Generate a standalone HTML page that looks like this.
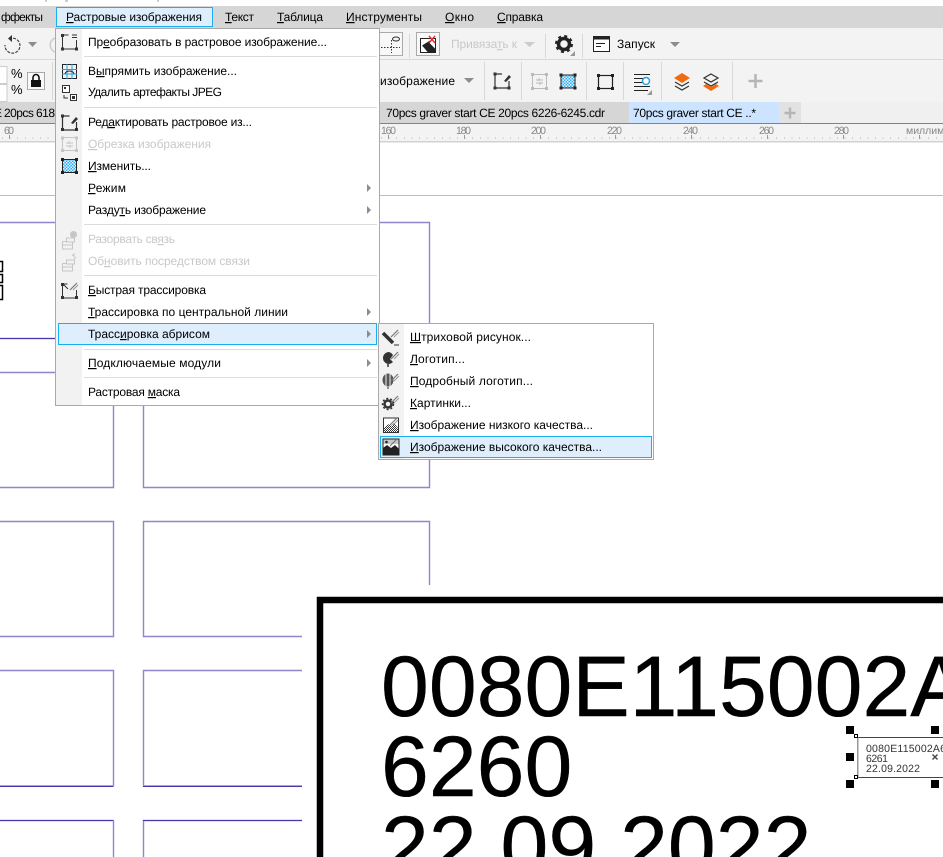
<!DOCTYPE html>
<html><head><meta charset="utf-8"><style>
html,body{margin:0;padding:0;background:#fff;overflow:hidden}
svg{display:block;font-family:"Liberation Sans","Noto Sans CJK SC",sans-serif;font-size:12px}
.u{text-decoration:underline}
.d{fill:#c9c9c9}
.g{fill:#868686;font-size:10.5px}
</style></head><body>
<svg width="943" height="857" viewBox="0 0 943 857" xmlns="http://www.w3.org/2000/svg" text-rendering="geometricPrecision">
<defs>
<pattern id="ch" width="3" height="3" patternUnits="userSpaceOnUse"><rect width="3" height="3" fill="#35aef0"/><rect width="1.5" height="1.5" fill="#dff2ff"/><rect x="1.5" y="1.5" width="1.5" height="1.5" fill="#dff2ff"/></pattern>
<pattern id="ch2" width="2" height="2" patternUnits="userSpaceOnUse"><rect width="2" height="2" fill="#fff"/><rect width="1" height="1" fill="#333"/><rect x="1" y="1" width="1" height="1" fill="#333"/></pattern>
<g id="hd"><rect x="-1.500" y="-1.500" width="3" height="3" fill="currentColor"/></g>
<g id="pen"><path d="M0 8 L7 1" stroke="#777" stroke-width="1.200" fill="none"/><path d="M3 8 L8 3" stroke="#999" stroke-width="1" fill="none"/></g>
</defs>

<!-- canvas -->
<rect width="943" height="857" fill="#fff"/>
<rect x="45" y="0" width="2" height="2" fill="#e0c4cc"/><rect x="65" y="0" width="3" height="2" fill="#ccc"/><rect x="157" y="0" width="2" height="2" fill="#e0c4cc"/>
<rect x="0" y="195" width="943" height="1" fill="#bdbdbd"/>
<g fill="none" stroke="#8f86cc" stroke-width="1.400">
<path d="M0 222.500H113.500V338.500H0"/><path d="M143.500 222.500H429.500V338.500H143.500Z"/>
<path d="M0 372.500H113.500V487.500H0"/><path d="M143.500 372.500H429.500V487.500H143.500Z"/>
<path d="M0 521.500H113.500V636.500H0"/><path d="M429.500 585V521.500H143.500V636.500H302"/>
<path d="M0 670.500H113.500V786H0"/><path d="M302 670.500H143.500V786H302"/>
<path d="M0 820.500H113.500V857"/><path d="M302 820.500H143.500V857"/>
</g>
<g fill="none" stroke="#4a38a8" shape-rendering="crispEdges"><path d="M0 786.500H113M143 786.500H302M0 820.500H113M143 820.500H302M0 338.500H55"/></g>
<g fill="none" stroke="#000" stroke-width="1.500"><rect x="-3" y="261.500" width="5.500" height="10"/><rect x="-3" y="274.500" width="5.500" height="8"/><rect x="-3" y="285.500" width="5.500" height="14"/></g>

<!-- big label -->
<rect x="303" y="590" width="640" height="267" fill="#fff"/>
<path d="M320 857V600H943" fill="none" stroke="#000" stroke-width="6.500"/>
<g fill="#000" stroke="#000" stroke-width=".4" style="font-size:86px">
<text x="381" y="716">0080E115002A6</text>
<text x="381" y="796">6260</text>
<text x="381" y="876">22.09.2022</text>
</g>
<rect x="857" y="737" width="86" height="41" fill="#fff"/>
<path d="M857 737.500H943M857 777.500H943" stroke="#444" stroke-width="1"/>
<rect x="857" y="737" width="1.500" height="41" fill="#999"/>
<g fill="#333" style="font-size:10.500px">
<text x="866" y="752" textLength="80">0080E115002A6</text>
<text x="866" y="762" textLength="22">6261</text>
<text x="866" y="772" textLength="54">22.09.2022</text>
</g>
<path d="M932.500 754.500l5 5m0-5l-5 5" stroke="#444" stroke-width="1.400"/>
<g fill="#000"><rect x="846" y="726" width="8" height="8"/><rect x="931" y="726" width="8" height="8"/><rect x="846" y="753" width="8" height="8"/><rect x="846" y="780" width="8" height="8"/><rect x="931" y="780" width="8" height="8"/></g>
<g fill="#fff" stroke="#000"><rect x="854.500" y="734.500" width="3" height="3"/><rect x="854.500" y="775.500" width="3" height="3"/></g>

<!-- chrome -->
<rect y="6" width="943" height="22" fill="#d6d6d6"/>
<rect y="28" width="943" height="74" fill="#f3f3f3"/>
<rect y="59" width="943" height="1" fill="#d8d8d8"/>
<rect y="102" width="943" height="21" fill="#f0f0f0"/>
<rect y="102" width="629" height="21" fill="#d6d6d6"/>
<rect x="629" y="102" width="150" height="21" fill="#cce4ff"/>
<rect x="779" y="102" width="22" height="21" fill="#e2e2e2"/>
<path d="M790 107.500v11M784.500 113h11" stroke="#b5b5b5" stroke-width="2.400"/>
<rect y="123" width="943" height="1" fill="#2a9fe0"/>
<rect y="124" width="943" height="17" fill="#f3f3f3"/>
<rect y="141" width="943" height="1.500" fill="#d2d2d2"/>

<!-- menu bar -->
<text x="1" y="21" textLength="42">ффекты</text>
<rect x="56.500" y="7.500" width="156" height="19" fill="#dfeefd" stroke="#18aef0"/>
<text x="66" y="21" textLength="136"><tspan class="u">Р</tspan>астровые изображения</text>
<text x="225" y="21" textLength="29"><tspan class="u">Т</tspan>екст</text>
<text x="277" y="21" textLength="46"><tspan class="u">Т</tspan>аблица</text>
<text x="346" y="21" textLength="76"><tspan class="u">И</tspan>нструменты</text>
<text x="445" y="21" textLength="29"><tspan class="u">О</tspan>кно</text>
<text x="497" y="21" textLength="46"><tspan class="u">С</tspan>правка</text>

<!-- toolbar 1 -->
<path d="M9 39a7.500 7.500 0 1 1-4 6" fill="none" stroke="#444" stroke-width="1.200" stroke-dasharray="3 1.200"/>
<path d="M12 35v7l-4-3.500z" fill="#333"/>
<path d="M28 42h9l-4.500 5z" fill="#8c8c8c"/>
<path d="M55 38a7.500 7.500 0 0 0 0 14" fill="none" stroke="#ccc" stroke-width="1.500"/>
<rect x="370.500" y="32.500" width="32" height="23" fill="#f8f8f8" stroke="#aaa"/>
<path d="M381 47.500h19M391.500 40v13" stroke="#333" stroke-dasharray="1.500 1.500"/><ellipse cx="396" cy="39" rx="3.500" ry="2" fill="none" stroke="#333"/>
<rect x="409" y="34" width="1" height="24" fill="#d8d8d8"/>
<rect x="416.500" y="32.500" width="23" height="23" fill="#f8f8f8" stroke="#aaa"/>
<rect x="420.500" y="38.500" width="15" height="14" fill="#fff" stroke="#222"/>
<path d="M422 45.500l8-5v3l5 5v4h-7z" fill="#222"/><path d="M429 36l6 7m0-7l-6 7" stroke="#e03030" stroke-width="1.400"/>
<text x="451" y="48" class="d" textLength="66">Привяза<tspan class="u">т</tspan>ь к</text>
<path d="M524 42h11l-5.500 5z" fill="#ccc"/>
<rect x="545" y="34" width="1" height="24" fill="#d8d8d8"/>
<circle cx="564" cy="44" r="5.500" fill="none" stroke="#222" stroke-width="3.500"/><circle cx="564" cy="44" r="8" fill="none" stroke="#222" stroke-width="2" stroke-dasharray="3 3.280"/>
<path d="M575 51v5h-5z" fill="#999"/>
<rect x="582" y="34" width="1" height="24" fill="#d8d8d8"/>
<rect x="593.500" y="36.500" width="16" height="15" fill="#fff" stroke="#222"/><rect x="593" y="36" width="17" height="3.500" fill="#222"/><path d="M596 43.500h9M596 46.500h5" stroke="#222"/>
<text x="617" y="48" textLength="38">Запуск</text>
<path d="M670 42h10l-5 5z" fill="#8c8c8c"/>

<!-- toolbar 2 -->
<rect x="-1" y="66.500" width="8" height="17" fill="#fff" stroke="#ccc"/><rect x="-1" y="84.500" width="8" height="17" fill="#fff" stroke="#ccc"/>
<text x="11" y="78" style="font-size:13px" textLength="10">%</text><text x="11" y="94" style="font-size:13px" textLength="10">%</text>
<rect x="27.500" y="72.500" width="17" height="17" fill="#f8f8f8" stroke="#aaa"/>
<rect x="31" y="80" width="10" height="7" fill="#111"/><path d="M33 80v-2.500a3 3 0 0 1 6 0V80" fill="none" stroke="#111" stroke-width="1.600"/>
<rect x="52" y="62" width="1" height="38" fill="#d8d8d8"/>
<text x="380" y="85" textLength="75">изображение</text>
<path d="M464 78h10l-5 5z" fill="#8c8c8c"/>
<rect x="484" y="62" width="1" height="38" fill="#d8d8d8"/>
<g color="#333"><path d="M495 74v14h14v-7M495 74h7" fill="none" stroke="#333" stroke-width="1.200"/><use href="#hd" x="495" y="74"/><use href="#hd" x="495" y="88"/><use href="#hd" x="509" y="88"/><path d="M504 81l5-6 2 2-5 5z" fill="#333"/></g>
<rect x="521" y="62" width="1" height="38" fill="#d8d8d8"/>
<g color="#bbb"><rect x="532.500" y="74.500" width="14" height="14" fill="none" stroke="#bbb"/><use href="#hd" x="532.500" y="74.500"/><use href="#hd" x="546.500" y="74.500"/><use href="#hd" x="532.500" y="88.500"/><use href="#hd" x="546.500" y="88.500"/><path d="M536 80h7M543 83h-7M539 78v3M540 82v3" stroke="#bbb"/></g>
<g color="#222"><rect x="561" y="75" width="14" height="13" fill="url(#ch)" stroke="#222"/><use href="#hd" x="561" y="75"/><use href="#hd" x="575" y="75"/><use href="#hd" x="561" y="88"/><use href="#hd" x="575" y="88"/></g>
<rect x="586" y="62" width="1" height="38" fill="#d8d8d8"/>
<g color="#222"><rect x="598.500" y="75.500" width="14" height="13" fill="none" stroke="#222" stroke-width="1.200"/><use href="#hd" x="598.500" y="75.500"/><use href="#hd" x="612.500" y="75.500"/><use href="#hd" x="598.500" y="88.500"/><use href="#hd" x="612.500" y="88.500"/></g>
<rect x="623" y="62" width="1" height="38" fill="#d8d8d8"/>
<path d="M634 74.500h16M634 78.500h9M634 82.500h9M634 86.500h16M634 90.500h14" stroke="#222"/><circle cx="646" cy="81" r="3.500" fill="#fff" stroke="#2a9fe0" stroke-width="1.500"/><path d="M652 90v5h-5z" fill="#999"/>
<rect x="661" y="62" width="1" height="38" fill="#d8d8d8"/>
<path d="M682 73l8 5-8 5-8-5z" fill="#f26a10"/><path d="M675 82l7 4 7-4M675 86l7 4 7-4" fill="none" stroke="#333" stroke-width="1.200"/>
<path d="M711 74l7 4-7 4-7-4zM704 82l7 4 7-4" fill="none" stroke="#333" stroke-width="1.200"/><path d="M711 91l8-5-3-2-5 3-5-3-3 2z" fill="#f26a10"/>
<rect x="732" y="62" width="1" height="38" fill="#d8d8d8"/>
<path d="M755.500 74v14M748.500 81h14" stroke="#b5b5b5" stroke-width="2.500"/>

<!-- tabs -->
<text x="-6" y="117">E</text>
<text x="4" y="117" textLength="51">20pcs 618</text>
<text x="386" y="117" textLength="219">70pcs graver start CE 20pcs 6226-6245.cdr</text>
<text x="633" y="117" textLength="123">70pcs graver start CE ..*</text>

<!-- ruler -->
<text x="4" y="134" class="g" textLength="10">60</text>
<text x="381" y="134" class="g" textLength="15">160</text>
<text x="456" y="134" class="g" textLength="15">180</text>
<text x="531" y="134" class="g" textLength="15">200</text>
<text x="607" y="134" class="g" textLength="15">220</text>
<text x="683" y="134" class="g" textLength="15">240</text>
<text x="759" y="134" class="g" textLength="15">260</text>
<text x="834" y="134" class="g" textLength="15">280</text>
<text x="906" y="134" class="g" textLength="62">миллиметры</text>
<g stroke="#999" shape-rendering="crispEdges">
<path d="M9.500 135v4M388.500 135v4M464.500 135v4M540.500 135v4M615.500 135v4M691.500 135v4M767.500 135v4M843.500 135v4M919.500 135v4"/>
<path stroke="#aaa" stroke-dasharray="1 6.600" d="M2 138H55M381 138H943"/>
</g>

<!-- main menu -->
<rect x="55.500" y="28.500" width="324" height="377" fill="#fff" stroke="#aaa"/>
<rect x="56" y="29" width="26" height="376" fill="#f2f2f2"/>
<g fill="#dcdcdc"><rect x="84" y="56" width="293" height="1"/><rect x="84" y="107" width="293" height="1"/><rect x="84" y="224" width="293" height="1"/><rect x="84" y="275" width="293" height="1"/><rect x="84" y="349" width="293" height="1"/><rect x="84" y="377" width="293" height="1"/></g>
<rect x="58.500" y="323.500" width="318" height="21" fill="#dfeefd" stroke="#18aef0"/>

<text x="88" y="46" textLength="239">Пр<tspan class="u">е</tspan>образовать в растровое изображение...</text>
<text x="88" y="75" textLength="149">В<tspan class="u">ы</tspan>прямить изображение...</text>
<text x="88" y="96" textLength="134">Удалить артефакты JPEG</text>
<text x="88" y="126" textLength="164">Ред<tspan class="u">а</tspan>ктировать растровое из...</text>
<text x="88" y="148" class="d" textLength="123"><tspan class="u">О</tspan>брезка изображения</text>
<text x="88" y="170" textLength="63"><tspan class="u">И</tspan>зменить...</text>
<text x="88" y="192" textLength="38"><tspan class="u">Р</tspan>ежим</text>
<text x="88" y="214" textLength="118">Разду<tspan class="u">т</tspan>ь изображение</text>
<text x="88" y="243" class="d" textLength="87">Разорвать св<tspan class="u">я</tspan>зь</text>
<text x="88" y="265" class="d" textLength="162">Об<tspan class="u">н</tspan>овить посредством связи</text>
<text x="88" y="294" textLength="118"><tspan class="u">Б</tspan>ыстрая трассировка</text>
<text x="88" y="316" textLength="200"><tspan class="u">Т</tspan>рассировка по центральной линии</text>
<text x="88" y="338" textLength="122">Трасс<tspan class="u">и</tspan>ровка абрисом</text>
<text x="88" y="367" textLength="133"><tspan class="u">П</tspan>одключаемые модули</text>
<text x="88" y="396" textLength="92">Растровая <tspan class="u">м</tspan>аска</text>
<g fill="#8c8c8c"><path d="M367 184v8l4-4zM367 206v8l4-4zM367 308v8l4-4zM367 330v8l4-4zM367 359v8l4-4z"/></g>

<!-- menu icons -->
<g color="#333">
<path d="M62.500 35v14h14V40M62.500 35h6M72 35h5M72 37.500h5" fill="none" stroke="#333"/><use href="#hd" x="62.500" y="35.500"/><use href="#hd" x="62.500" y="49"/><use href="#hd" x="76.500" y="49"/>
<rect x="62.500" y="64.500" width="14" height="14" fill="none" stroke="#222"/><path d="M62 69.500h15M62 74h15M67 64v15M72 64v15" stroke="#2a9fe0"/><path d="M65 74a4.500 3 0 0 1 9 0" fill="none" stroke="#222"/>
<rect x="62.500" y="85.500" width="7" height="7" fill="#fff" stroke="#333"/><rect x="64" y="87" width="2" height="2" fill="#333"/><rect x="70.500" y="94.500" width="6" height="6" fill="#fff" stroke="#333"/><rect x="72" y="96" width="3" height="3" fill="#333"/><path d="M64 95v3h4" fill="none" stroke="#333"/>
<path d="M62.500 116v14h14v-8M62.500 116h7" fill="none" stroke="#333" stroke-width="1.200"/><use href="#hd" x="62.500" y="116"/><use href="#hd" x="62.500" y="129.500"/><use href="#hd" x="76.500" y="129.500"/><path d="M71 123l5-6 2 2-5 5z" fill="#333"/>
</g>
<g color="#c6c6c6"><rect x="62.500" y="137.500" width="14" height="13" fill="none" stroke="#c6c6c6"/><use href="#hd" x="62.500" y="138"/><use href="#hd" x="76.500" y="138"/><use href="#hd" x="62.500" y="150.500"/><use href="#hd" x="76.500" y="150.500"/><path d="M66 143h7M73 146h-7M69 141v3M70 145v3" stroke="#c6c6c6"/></g>
<g color="#222"><rect x="62.500" y="159.500" width="14" height="13" fill="url(#ch)" stroke="#222"/><use href="#hd" x="62.500" y="159.500"/><use href="#hd" x="76.500" y="159.500"/><use href="#hd" x="62.500" y="172.500"/><use href="#hd" x="76.500" y="172.500"/></g>
<g fill="none" stroke="#c6c6c6"><rect x="62.500" y="241.500" width="10" height="4"/><rect x="62.500" y="245" width="10" height="4" fill="#f2f2f2"/><rect x="66.500" y="238" width="8" height="4" fill="#f2f2f2"/><rect x="62.500" y="263.500" width="10" height="4"/><rect x="62.500" y="267" width="10" height="4" fill="#f2f2f2"/><rect x="66.500" y="260" width="8" height="4" fill="#f2f2f2"/></g>
<circle cx="73.500" cy="234.500" r="3.500" fill="#c6c6c6"/><path d="M72 256l2-2v3M74 259l2-2" stroke="#c6c6c6" fill="none"/>
<g color="#333"><path d="M62.500 284v14h14v-8M62.500 284h5M63 284l5 5" fill="none" stroke="#333"/><use href="#hd" x="62.500" y="284.500"/><use href="#hd" x="62.500" y="297.500"/><use href="#hd" x="76.500" y="297.500"/><use href="#pen" x="70" y="282"/></g>

<!-- submenu -->
<rect x="378.500" y="323.500" width="275" height="136" fill="#fff" stroke="#aaa"/>
<rect x="379" y="324" width="25" height="135" fill="#f2f2f2"/>
<rect x="380.500" y="436.500" width="271" height="21" fill="#dfeefd" stroke="#18aef0"/>
<text x="410" y="341" textLength="121"><tspan class="u">Ш</tspan>триховой рисунок...</text>
<text x="410" y="363" textLength="55"><tspan class="u">Л</tspan>оготип...</text>
<text x="410" y="385" textLength="123"><tspan class="u">П</tspan>одробный логотип...</text>
<text x="410" y="407" textLength="61"><tspan class="u">К</tspan>артинки...</text>
<text x="410" y="429" textLength="183"><tspan class="u">И</tspan>зображение низкого качества...</text>
<text x="410" y="451" textLength="192"><tspan class="u">И</tspan>зображение высокого качества...</text>
<path d="M383 333l10 10" stroke="#333" stroke-width="3.500"/><path d="M394 345h5" stroke="#333"/><use href="#pen" x="391" y="329"/>
<path d="M389 352a6 6 0 1 0 0 12 7 7 0 0 0 4-2l-3-3 3-4a7 7 0 0 0-4-3z" fill="#333"/><path d="M388 364v3" stroke="#333" stroke-width="1.500"/><use href="#pen" x="391" y="351"/>
<ellipse cx="388" cy="380" rx="5.500" ry="6.500" fill="#555"/><path d="M386 374v12M390 374v12" stroke="#f2f2f2"/><path d="M388 387v2" stroke="#333"/><use href="#pen" x="391" y="373"/>
<circle cx="388" cy="404" r="3.500" fill="none" stroke="#333" stroke-width="2.500"/><circle cx="388" cy="404" r="5.500" fill="none" stroke="#333" stroke-width="1.500" stroke-dasharray="2 2"/><use href="#pen" x="391" y="395"/>
<path d="M383.500 432v-14h15v14" fill="#fff" stroke="#333"/><path d="M384 432v-4l4-4 3 2 3-3 4 5v4z" fill="url(#ch2)"/><rect x="383" y="432" width="16" height="1" fill="#333"/><use href="#pen" x="390" y="417"/>
<rect x="383" y="439" width="16" height="16" fill="#fff" stroke="#222"/><path d="M383 455v-7l4-3 4 3 4-3 4 4v6z" fill="#222"/><rect x="383" y="439" width="16" height="5" fill="#222" opacity=".25"/><path d="M390 446l6-6" stroke="#777" stroke-width="1.200"/><circle cx="386.500" cy="442" r="1.300" fill="#222"/>
</svg>
</body></html>
